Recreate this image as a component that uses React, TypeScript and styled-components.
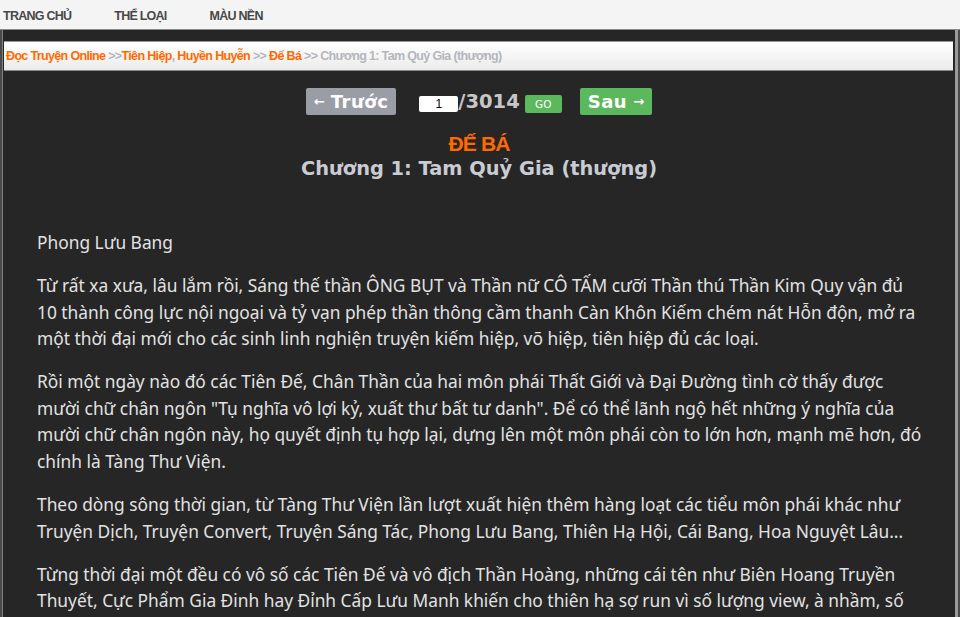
import React from "react";
import styled, { createGlobalStyle } from "styled-components";

const Global = createGlobalStyle`
  html, body { margin: 0; padding: 0; background: #262626; overflow: hidden; }
  body { font-family: "Liberation Sans", Arial, sans-serif; }
`;

const Page = styled.div`
  width: 960px;
  height: 617px;
  display: flex;
  flex-direction: column;
  overflow: hidden;
  background: #4a4a4a;
`;

const TopNav = styled.nav`
  height: 29px;
  flex: none;
  background: #f4f4f4;
  border-bottom: 1px solid #8a8a8a;
  display: flex;
  align-items: center;
  padding-left: 3px;
  gap: 43px;
`;

const NavItem = styled.a`
  font-family: "Liberation Sans", Arial, sans-serif;
  font-weight: bold;
  font-size: 12.5px;
  letter-spacing: -0.75px;
  color: #484848;
  text-decoration: none;
  padding-top: 2px;
`;

const Main = styled.div`
  flex: 1;
  display: flex;
  flex-direction: column;
  margin-left: 2px;
  margin-right: 2px;
  border-left: 1px solid #808080;
  border-right: 3px solid #9a9a9a;
  background: #262626;
  padding-top: 11px;
`;

const Breadcrumb = styled.div`
  height: 28px;
  margin-right: 2px;
  margin-left: 1px;
  background: linear-gradient(#ffffff, #ebebeb);
  border-top: 1px solid #9a9a9a;
  border-bottom: 1px solid #8a8a8a;
  display: flex;
  align-items: center;
  padding-left: 2px;
  font-family: "Liberation Sans", Arial, sans-serif;
  font-weight: bold;
  font-size: 12.5px;
  letter-spacing: -0.65px;
  white-space: pre;
`;

const Crumb = styled.span<{ $current?: boolean }>`
  color: ${(p) => (p.$current ? "#b4b6bc" : "#ff6a00")};
`;

const Sep = styled.span`
  color: #b4b6bc;
`;

const Pager = styled.div`
  display: flex;
  justify-content: center;
  align-items: center;
  margin-top: 17px;
  height: 27px;
`;

const PageButton = styled.button<{ $green?: boolean }>`
  height: 27px;
  border: none;
  border-radius: 2px;
  background: ${(p) => (p.$green ? "#5cb85c" : "#9a9da5")};
  color: #fff;
  font-family: "DejaVu Sans", Verdana, sans-serif;
  font-weight: bold;
  font-size: 18px;
  letter-spacing: 0.5px;
  padding: 0 8px 0 8px;
  display: flex;
  align-items: center;
  gap: 6px;
  cursor: pointer;
`;

const Arrow = styled.span`
  font-size: 13px;
  letter-spacing: 0;
`;

const Jump = styled.div`
  display: flex;
  align-items: center;
  margin: 0 18px 0 23px;
`;

const PageInput = styled.input`
  width: 39px;
  height: 16px;
  box-sizing: border-box;
  border: none;
  border-radius: 2px;
  padding: 0 4px;
  text-align: center;
  font-family: "Liberation Sans", Arial, sans-serif;
  font-size: 12px;
  color: #000;
  background: #fff;
  margin-top: 4px;
`;

const Total = styled.span`
  font-family: "DejaVu Sans", Verdana, sans-serif;
  font-weight: bold;
  font-size: 19.5px;
  color: #c6c6c6;
  margin-right: 5px;
`;

const GoButton = styled.button`
  width: 37px;
  height: 18px;
  border: none;
  border-radius: 2px;
  background: #5cb85c;
  color: #fff;
  font-family: "DejaVu Sans", Verdana, sans-serif;
  font-size: 10.5px;
  padding: 0;
  margin-top: 4px;
`;

const StoryTitle = styled.h1`
  margin: 16px 0 0;
  text-align: center;
  font-family: "Liberation Sans", Arial, sans-serif;
  font-weight: bold;
  font-size: 21px;
  letter-spacing: -0.9px;
  line-height: 26px;
  color: #ff6a00;
`;

const ChapterTitle = styled.h2`
  margin: 0;
  text-align: center;
  font-family: "DejaVu Sans", Verdana, sans-serif;
  font-weight: bold;
  font-size: 19.4px;
  line-height: 24px;
  color: #c9ccd2;
`;

const Content = styled.div`
  padding: 48px 28px 0 34px;
  font-family: "Noto Sans", "DejaVu Sans", sans-serif;
  font-size: 17.35px;
  line-height: 26.6px;
  color: #e2e2e2;
`;

const Para = styled.p`
  margin: 0 0 16.4px;
`;

const paragraphs = [
  "Phong Lưu Bang",
  "Từ rất xa xưa, lâu lắm rồi, Sáng thế thần ÔNG BỤT và Thần nữ CÔ TẤM cưỡi Thần thú Thần Kim Quy vận đủ 10 thành công lực nội ngoại và tỷ vạn phép thần thông cầm thanh Càn Khôn Kiếm chém nát Hỗn độn, mở ra một thời đại mới cho các sinh linh nghiện truyện kiếm hiệp, võ hiệp, tiên hiệp đủ các loại.",
  "Rồi một ngày nào đó các Tiên Đế, Chân Thần của hai môn phái Thất Giới và Đại Đường tình cờ thấy được mười chữ chân ngôn \"Tụ nghĩa vô lợi kỷ, xuất thư bất tư danh\". Để có thể lãnh ngộ hết những ý nghĩa của mười chữ chân ngôn này, họ quyết định tụ hợp lại, dựng lên một môn phái còn to lớn hơn, mạnh mẽ hơn, đó chính là Tàng Thư Viện.",
  "Theo dòng sông thời gian, từ Tàng Thư Viện lần lượt xuất hiện thêm hàng loạt các tiểu môn phái khác như Truyện Dịch, Truyện Convert, Truyện Sáng Tác, Phong Lưu Bang, Thiên Hạ Hội, Cái Bang, Hoa Nguyệt Lâu...",
  "Từng thời đại một đều có vô số các Tiên Đế và vô địch Thần Hoàng, những cái tên như Biên Hoang Truyền Thuyết, Cực Phẩm Gia Đinh hay Đỉnh Cấp Lưu Manh khiến cho thiên hạ sợ run vì số lượng view, à nhầm, số lượng người đọc khủng khiếp.",
];

export default function App() {
  return (
    <Page>
      <Global />
      <TopNav>
        <NavItem>TRANG CHỦ</NavItem>
        <NavItem>THỂ LOẠI</NavItem>
        <NavItem>MÀU NỀN</NavItem>
      </TopNav>
      <Main>
        <Breadcrumb>
          <Crumb>Đọc Truyện Online</Crumb>
          <Sep> &gt;&gt;</Sep>
          <Crumb>Tiên Hiệp</Crumb>
          <Sep>, </Sep>
          <Crumb>Huyền Huyễn</Crumb>
          <Sep> &gt;&gt; </Sep>
          <Crumb>Đế Bá</Crumb>
          <Sep> &gt;&gt; </Sep>
          <Crumb $current>Chương 1: Tam Quỷ Gia (thượng)</Crumb>
        </Breadcrumb>
        <Pager>
          <PageButton>
            <Arrow>←</Arrow>Trước
          </PageButton>
          <Jump>
            <PageInput defaultValue="1" />
            <Total>/3014</Total>
            <GoButton>GO</GoButton>
          </Jump>
          <PageButton $green>
            Sau<Arrow>→</Arrow>
          </PageButton>
        </Pager>
        <StoryTitle>ĐẾ BÁ</StoryTitle>
        <ChapterTitle>Chương 1: Tam Quỷ Gia (thượng)</ChapterTitle>
        <Content>
          {paragraphs.map((t, i) => (
            <Para key={i}>{t}</Para>
          ))}
        </Content>
      </Main>
    </Page>
  );
}
